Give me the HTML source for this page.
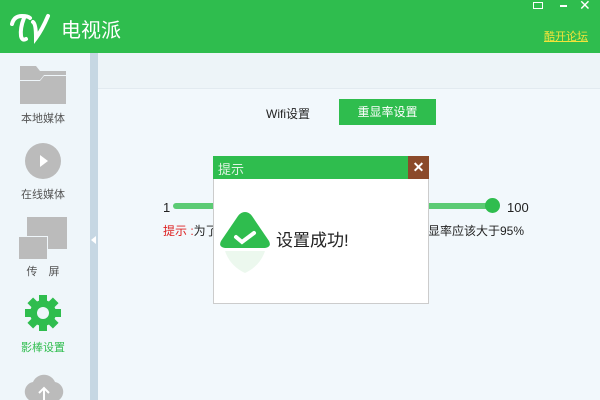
<!DOCTYPE html>
<html><head><meta charset="utf-8"><style>
*{margin:0;padding:0;box-sizing:border-box}
body{width:600px;height:400px;overflow:hidden;position:relative;background:#f2f8fc;font-family:"Liberation Sans","Noto Sans CJK SC",sans-serif}
.hdr{position:absolute;left:0;top:0;width:600px;height:53px;background:#2fbd4e}
.side{position:absolute;left:0;top:53px;width:90px;height:347px;background:#eff6fa}
.bar{position:absolute;left:90px;top:53px;width:8px;height:347px;background:#c6d7e3}
.strip{position:absolute;left:98px;top:53px;width:502px;height:36px;background:#edf4f8;border-bottom:1px solid #e2eaf0}
.lbl{position:absolute;width:90px;text-align:center;font-size:11px;color:#555}
.abs{position:absolute}
</style></head><body>
<div class="hdr"></div>
<svg class="abs" style="left:8px;top:10px" width="50" height="34"><g stroke="#fff" stroke-width="4" fill="none" stroke-linecap="round"><path d="M4 14Q6 6 14 6Q20 6 22 8"/><path d="M16 8Q12 18 13 26Q14 31 18 29"/><path d="M25 12Q28 14 28 28Q34 20 40 6"/></g></svg>
<div class="abs" style="left:61px;top:14px;font-size:20px;color:#fff">电视派</div>
<div class="abs" style="left:533px;top:2px;width:10px;height:7px;border:1px solid #fff"></div>
<div class="abs" style="left:560px;top:5px;width:7px;height:2px;background:#fff"></div>
<div class="abs" style="left:579px;top:-3px;color:#fff;font-size:14px">✕</div>
<div class="abs" style="left:544px;top:28px;font-size:11px;color:#f2e33a;text-decoration:underline">酷开论坛</div>
<div class="side"></div><div class="bar"></div>
<div class="abs" style="left:91px;top:236px;width:0;height:0;border-top:4px solid transparent;border-bottom:4px solid transparent;border-right:5px solid #fff"></div>
<div class="strip"></div>
<svg class="abs" style="left:20px;top:66px" width="46" height="38"><path d="M0 0h16l4 5h26v4H24l-4 5H0z" fill="#bbb"/><path d="M0 15h20l4-5h22v28H0z" fill="#bbb"/></svg>
<div class="lbl" style="left:-2px;top:110px">本地媒体</div>
<svg class="abs" style="left:25px;top:143px" width="36" height="36"><circle cx="18" cy="18" r="18" fill="#bbb"/><path d="M15 12l8 6-8 6z" fill="#fff"/></svg>
<div class="lbl" style="left:-2px;top:186px">在线媒体</div>
<div class="abs" style="left:27px;top:217px;width:40px;height:32px;background:#bbb"></div>
<div class="abs" style="left:18px;top:236px;width:30px;height:24px;background:#bbb;border:1px solid #eff6fa"></div>
<div class="lbl" style="left:-2px;top:263px">传　屏</div>
<svg class="abs" style="left:25px;top:295px" width="36" height="36" viewBox="-18 -18 36 36"><g fill="#2fbd4e"><circle r="13"/><rect x="-4" y="-18" width="8" height="36"/><rect x="-4" y="-18" width="8" height="36" transform="rotate(45)"/><rect x="-4" y="-18" width="8" height="36" transform="rotate(90)"/><rect x="-4" y="-18" width="8" height="36" transform="rotate(135)"/></g><circle r="6" fill="#eff6fa"/></svg>
<div class="lbl" style="left:-2px;top:339px;color:#2fbd4e">影棒设置</div>
<svg class="abs" style="left:19px;top:370px" width="50" height="30"><path d="M10 30a10 10 0 0 1 4-18a12 12 0 0 1 22 0a10 10 0 0 1 4 18z" fill="#bbb"/><path d="M25 30V18m-5 5l5-5 5 5" stroke="#fff" stroke-width="2" fill="none"/></svg>
<div class="abs" style="left:266px;top:105px;font-size:12px;color:#222">Wifi设置</div>
<div class="abs" style="left:339px;top:99px;width:97px;height:26px;background:#2fbd4e;color:#fff;font-size:12px;text-align:center;line-height:26px">重显率设置</div>
<div class="abs" style="left:163px;top:200px;font-size:13px;color:#222">1</div>
<div class="abs" style="left:173px;top:203px;width:325px;height:6px;background:#5ccb74;border-radius:3px"></div>
<div class="abs" style="left:485px;top:198px;width:15px;height:15px;background:#2fbd4e;border-radius:50%"></div>
<div class="abs" style="left:507px;top:200px;font-size:13px;color:#222">100</div>
<div class="abs" style="left:163px;top:222px;font-size:12px;color:#d22"><span>提示 :</span><span style="color:#222">为了</span></div>
<div class="abs" style="left:428px;top:222px;font-size:12px;color:#222">显率应该大于95%</div>
<div class="abs" style="left:213px;top:156px;width:216px;height:148px;background:#fff;border:1px solid #ccc"></div>
<div class="abs" style="left:213px;top:156px;width:216px;height:23px;background:#2fbd4e"></div>
<div class="abs" style="left:218px;top:159px;font-size:13px;color:#dff3e3">提示</div>
<div class="abs" style="left:408px;top:156px;width:21px;height:23px;background:#8b4a2a;color:#fff;text-align:center;line-height:23px;font-size:14px;font-weight:bold">✕</div>
<svg class="abs" style="left:218px;top:211px" width="54" height="70"><path d="M27 1Q31 1 34 5L51 30Q54 36 47 37H7Q0 36 3 30L20 5Q23 1 27 1z" fill="#2fbd4e"/><path d="M18 26l6 5 12-9" stroke="#fff" stroke-width="4" fill="none" stroke-linecap="round"/><path d="M7 40H47Q42 55 27 62Q12 55 7 40z" fill="#dff3e3" opacity=".6"/></svg>
<div class="abs" style="left:276px;top:226px;font-size:17px;color:#222">设置成功!</div>
</body></html>
